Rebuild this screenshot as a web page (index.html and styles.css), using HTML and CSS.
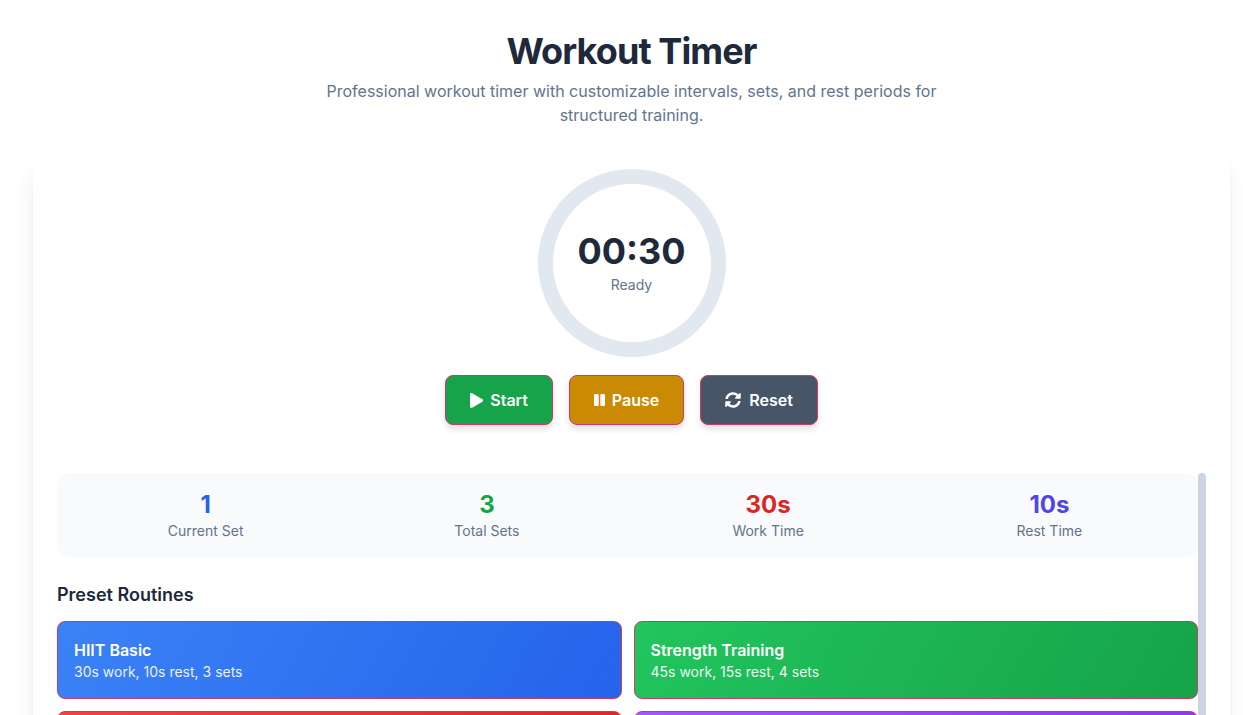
FILE: index.html
```html
<!DOCTYPE html>
<html lang="en">
<head>
    <meta charset="UTF-8">
    <meta name="viewport" content="width=device-width, initial-scale=1.0">
    <title>Workout Timer</title>
    <link rel="stylesheet" href="styles.css">
</head>
<body>
    <div class="page">
        <header class="page-header">
            <h1>Workout Timer</h1>
            <p>Professional workout timer with customizable intervals, sets, and rest periods for structured training.</p>
        </header>

        <main class="card">
            <div class="timer-ring">
                <div class="timer-time">00:30</div>
                <div class="timer-status">Ready</div>
            </div>

            <div class="controls">
                <button class="btn btn-start">
                    <svg class="icon" viewBox="0 0 448 512"><path d="M424.4 214.7L72.4 6.6C43.8-10.3 0 6.1 0 47.9V464c0 37.5 40.7 60.1 72.4 41.3l352-208c31.4-18.5 31.5-64.1 0-82.6z"/></svg>
                    Start
                </button>
                <button class="btn btn-pause">
                    <svg class="icon icon-pause" viewBox="0 31 448 448" preserveAspectRatio="none"><path d="M144 479H48c-26.5 0-48-21.5-48-48V79c0-26.5 21.5-48 48-48h96c26.5 0 48 21.5 48 48v352c0 26.5-21.5 48-48 48zm304-48V79c0-26.5-21.5-48-48-48h-96c-26.5 0-48 21.5-48 48v352c0 26.5 21.5 48 48 48h96c26.5 0 48-21.5 48-48z"/></svg>
                    Pause
                </button>
                <button class="btn btn-reset">
                    <svg class="icon icon-reset" viewBox="0 0 512 512"><path d="M370.72 133.28C339.458 104.008 298.888 87.962 255.848 88c-77.458.068-144.328 53.178-162.791 126.85-1.344 5.363-6.122 9.15-11.651 9.15H24.103c-7.498 0-13.194-6.807-11.807-14.176C33.933 94.924 134.813 8 256 8c66.448 0 126.791 26.136 171.315 68.685L463.03 40.97C478.149 25.851 504 36.559 504 57.941V192c0 13.255-10.745 24-24 24H345.941c-21.382 0-32.09-25.851-16.971-40.971l41.75-41.749zM32 296h134.059c21.382 0 32.09 25.851 16.971 40.971l-41.75 41.75c31.262 29.273 71.835 45.319 114.876 45.28 77.418-.07 144.315-53.144 162.787-126.849 1.344-5.363 6.122-9.15 11.651-9.15h57.304c7.498 0 13.194 6.807 11.807 14.176C478.067 417.076 377.187 504 256 504c-66.448 0-126.791-26.136-171.315-68.685L48.97 471.03C33.851 486.149 8 475.441 8 454.059V320c0-13.255 10.745-24 24-24z"/></svg>
                    Reset
                </button>
            </div>

            <div class="scroll-area">
                <div class="scroll-thumb"></div>

                <section class="stats">
                    <div class="stat">
                        <div class="stat-value blue">1</div>
                        <div class="stat-label">Current Set</div>
                    </div>
                    <div class="stat">
                        <div class="stat-value green">3</div>
                        <div class="stat-label">Total Sets</div>
                    </div>
                    <div class="stat">
                        <div class="stat-value red">30s</div>
                        <div class="stat-label">Work Time</div>
                    </div>
                    <div class="stat">
                        <div class="stat-value indigo">10s</div>
                        <div class="stat-label">Rest Time</div>
                    </div>
                </section>

                <h2>Preset Routines</h2>
                <div class="presets">
                    <div class="preset preset-blue">
                        <div class="preset-name">HIIT Basic</div>
                        <div class="preset-info">30s work, 10s rest, 3 sets</div>
                    </div>
                    <div class="preset preset-green">
                        <div class="preset-name">Strength Training</div>
                        <div class="preset-info">45s work, 15s rest, 4 sets</div>
                    </div>
                    <div class="preset preset-red">
                        <div class="preset-name">Tabata</div>
                        <div class="preset-info">20s work, 10s rest, 8 sets</div>
                    </div>
                    <div class="preset preset-purple">
                        <div class="preset-name">Endurance</div>
                        <div class="preset-info">60s work, 20s rest, 5 sets</div>
                    </div>
                </div>
            </div>
        </main>
    </div>
</body>
</html>
```

FILE: styles.css
```css
* {
    box-sizing: border-box;
}

html,
body {
    height: 100%;
}

body {
    margin: 0;
    overflow: hidden;
    background: white;
    color: #1e293b;
    font-family: Inter, "Noto Sans", sans-serif;
}

.page {
    padding: 31px 13px 0 33px;
}

.page-header {
    text-align: center;
    margin-bottom: 18px;
}

h1 {
    margin: 0 0 8px 0;
    font-size: 36px;
    line-height: 40px;
    font-weight: 700;
    letter-spacing: -0.9px;
}

.page-header p {
    max-width: 640px;
    margin: 0 auto;
    color: #64748b;
    font-size: 16px;
    line-height: 24px;
}

.card {
    padding: 24px;
    background: white;
    border-radius: 16px;
    box-shadow: 0 20px 25px -5px rgba(0,0,0,0.1), 0 8px 10px -6px rgba(0,0,0,0.1);
}

.timer-ring {
    width: 188px;
    height: 188px;
    margin: 0 auto 18px auto;
    border: 15px solid #e2e8f0;
    border-radius: 50%;
    display: flex;
    flex-direction: column;
    align-items: center;
    justify-content: center;
}

.timer-time {
    font-size: 36px;
    line-height: 40px;
    font-weight: 700;
}

.timer-status {
    margin-top: 4px;
    color: #64748b;
    font-size: 14px;
    line-height: 20px;
}

.controls {
    display: flex;
    justify-content: center;
    gap: 16px;
    margin-bottom: 48px;
}

.btn {
    display: flex;
    align-items: center;
    gap: 8px;
    height: 50px;
    padding: 0 24px;
    color: white;
    border: 1px solid #cf3a6b;
    border-radius: 8px;
    font-family: inherit;
    font-size: 16px;
    font-weight: 600;
    box-shadow: 0 4px 6px rgba(0,0,0,0.12);
}

.icon {
    height: 15px;
    fill: white;
}

.icon-pause {
    width: 11px;
    height: 12px;
}

.icon-reset {
    height: 16px;
}

.btn-start { background: #16a34a; gap: 7px; }
.btn-pause { background: #ca8a04; gap: 7px; }
.btn-reset { background: #475569; }

.scroll-area {
    position: relative;
    height: 320px;
    padding-right: 8px;
    overflow: hidden;
}

.scroll-thumb {
    position: absolute;
    top: 0;
    right: 0;
    width: 8px;
    height: 280px;
    background: #cbd5e1;
    border-radius: 4px;
}

.stats {
    display: grid;
    grid-template-columns: repeat(4, 1fr);
    padding: 16px 8px;
    height: 84px;
    margin-bottom: 24px;
    background: #f8fafc;
    border-radius: 12px;
    text-align: center;
}

.stat-value {
    font-size: 24px;
    line-height: 32px;
    font-weight: 700;
}

.stat-label {
    color: #64748b;
    font-size: 14px;
    line-height: 20px;
}

.blue { color: #2563eb; }
.green { color: #16a34a; }
.red { color: #dc2626; }
.indigo { color: #4f46e5; }

h2 {
    margin: 0 0 12px 0;
    font-size: 18px;
    line-height: 28px;
    font-weight: 600;
}

.presets {
    display: grid;
    grid-template-columns: 1fr 1fr;
    gap: 12px;
}

.preset {
    height: 78px;
    padding: 16px;
    color: white;
    border: 1px solid #cf3a6b;
    border-radius: 8px;
}

.preset-name {
    font-size: 16px;
    line-height: 24px;
    font-weight: 600;
}

.preset-info {
    font-size: 14px;
    line-height: 20px;
    opacity: 0.9;
}

.preset-blue { background: linear-gradient(120deg, #3b82f6, #2563eb); }
.preset-green { background: linear-gradient(120deg, #22c55e, #16a34a); }
.preset-red { background: linear-gradient(120deg, #ef4444, #dc2626); }
.preset-purple { background: linear-gradient(120deg, #a855f7, #9333ea); }
```
